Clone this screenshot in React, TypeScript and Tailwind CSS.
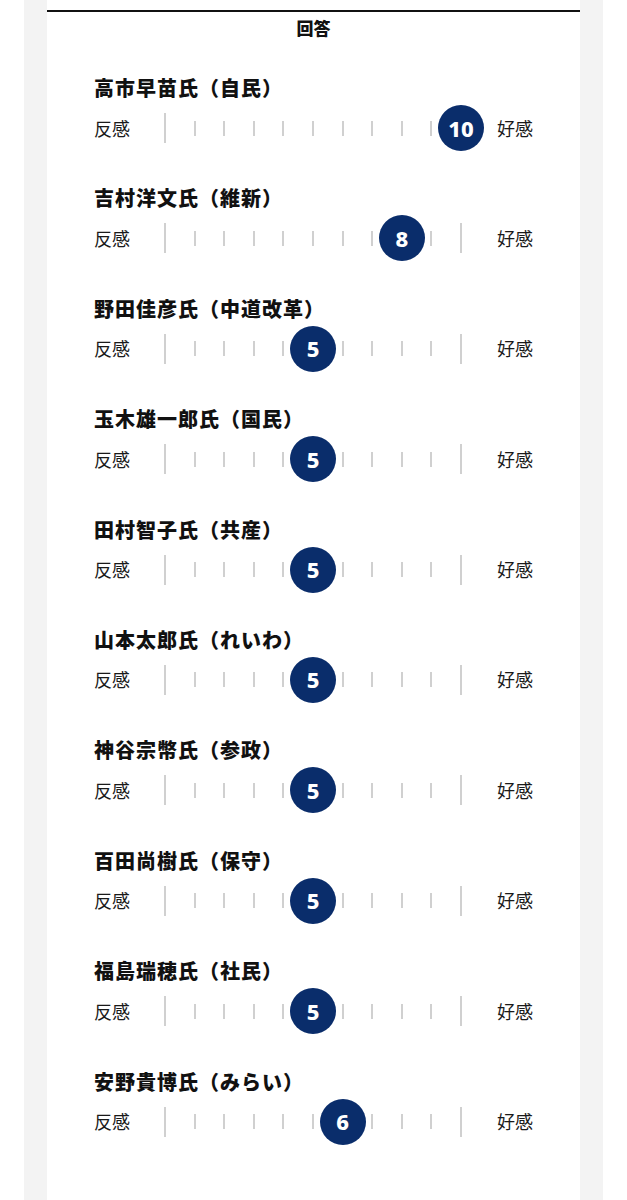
import React from "react";

type Answer = { name: string; score: number };

const answers: Answer[] = [
  { name: "高市早苗氏（自民）", score: 10 },
  { name: "吉村洋文氏（維新）", score: 8 },
  { name: "野田佳彦氏（中道改革）", score: 5 },
  { name: "玉木雄一郎氏（国民）", score: 5 },
  { name: "田村智子氏（共産）", score: 5 },
  { name: "山本太郎氏（れいわ）", score: 5 },
  { name: "神谷宗幣氏（参政）", score: 5 },
  { name: "百田尚樹氏（保守）", score: 5 },
  { name: "福島瑞穂氏（社民）", score: 5 },
  { name: "安野貴博氏（みらい）", score: 6 },
];

const SCALE_WIDTH = 298;
const STEPS = 10;

function Scale({ score }: { score: number }) {
  const center = 1 + (score * (SCALE_WIDTH - 2)) / STEPS;
  return (
    <div className="relative h-[46px] w-[298px] flex items-center justify-between">
      {Array.from({ length: STEPS + 1 }).map((_, i) =>
        i === 0 || i === STEPS ? (
          <div key={i} className="w-[2px] h-[30px] bg-[#d0d0d0]" />
        ) : (
          <div key={i} className="w-[2px] h-[15px] bg-[#d0d0d0]" />
        )
      )}
      <div
        className="absolute top-0 w-[46px] h-[46px] rounded-full bg-[#0a2d6b] text-white flex items-center justify-center text-[22px] font-extrabold font-['Noto_Sans',sans-serif]"
        style={{ left: center - 23 }}
      >
        {score}
      </div>
    </div>
  );
}

export default function App() {
  return (
    <div className="min-h-[1200px] bg-white font-['Noto_Sans_CJK_JP','Noto_Sans',sans-serif] text-[#111]">
      <div className="mx-[24px] w-[579px] min-h-[1200px] bg-[#f3f3f3] px-[23px]">
        <div className="bg-white min-h-[1200px] pt-[10px]">
          <div className="h-[2px] bg-[#111]" />
          <h2 className="mt-[4px] text-center text-[17px] leading-[24px] font-black">回答</h2>
          <div className="mt-[33px] px-[47px]">
            {answers.map((a) => (
              <div key={a.name} className="h-[110.4px]">
                <div className="text-[20px] leading-[30px] font-black tracking-[1px]">{a.name}</div>
                <div className="mt-[2px] flex items-center">
                  <div className="w-[70px] text-[18px] text-[#1a1a1a]">反感</div>
                  <Scale score={a.score} />
                  <div className="flex-1 text-right text-[18px] text-[#1a1a1a]">好感</div>
                </div>
              </div>
            ))}
          </div>
        </div>
      </div>
    </div>
  );
}
